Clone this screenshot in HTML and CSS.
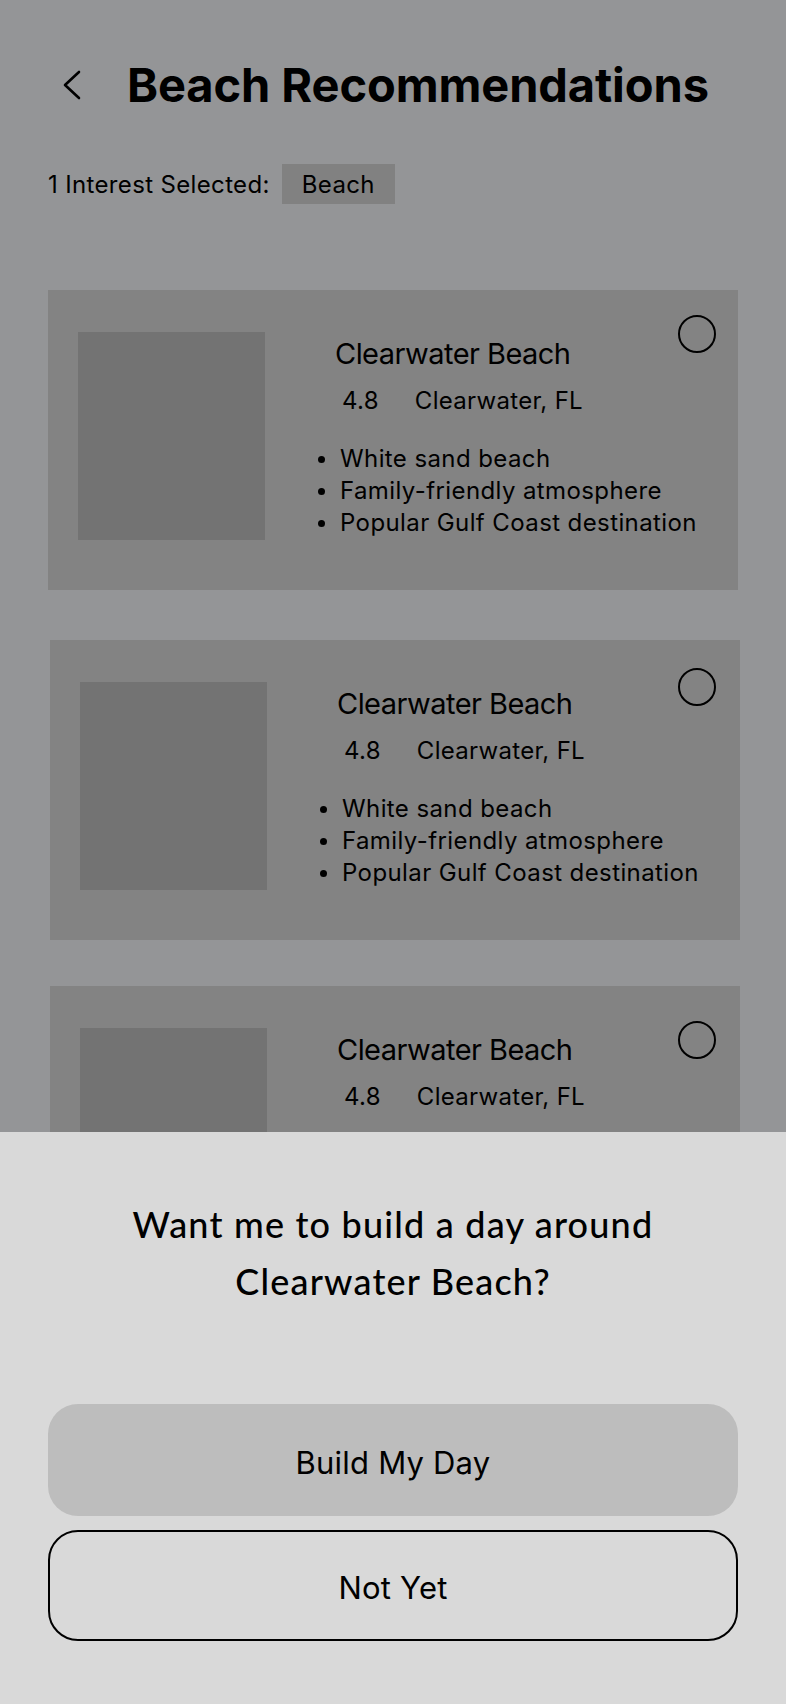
FILE: index.html
```html
<!DOCTYPE html>
<html lang="en">
<head>
<meta charset="utf-8">
<title>Beach Recommendations</title>
<link rel="stylesheet" href="styles.css">
</head>
<body>
<div class="screen">
  <header class="top">
    <button class="back" aria-label="Back">
      <svg width="20" height="30" viewBox="0 0 20 30"><polyline points="17,2 3,15 17,28" fill="none" stroke="#000" stroke-width="2.6" stroke-linecap="round" stroke-linejoin="round"/></svg>
    </button>
    <h1 class="title">Beach Recommendations</h1>
  </header>

  <div class="interest">
    <span class="interest-label">1 Interest Selected:</span>
    <span class="chip">Beach</span>
  </div>

  <div class="cards">
    <article class="card">
      <div class="photo"></div>
      <div class="info">
        <h2 class="name">Clearwater Beach</h2>
        <div class="meta"><span class="rating">4.8</span><span class="loc">Clearwater, FL</span></div>
        <ul class="points">
          <li>White sand beach</li>
          <li>Family-friendly atmosphere</li>
          <li>Popular Gulf Coast destination</li>
        </ul>
      </div>
      <span class="radio"></span>
    </article>
    <article class="card second">
      <div class="photo"></div>
      <div class="info">
        <h2 class="name">Clearwater Beach</h2>
        <div class="meta"><span class="rating">4.8</span><span class="loc">Clearwater, FL</span></div>
        <ul class="points">
          <li>White sand beach</li>
          <li>Family-friendly atmosphere</li>
          <li>Popular Gulf Coast destination</li>
        </ul>
      </div>
      <span class="radio"></span>
    </article>
    <article class="card third">
      <div class="photo"></div>
      <div class="info">
        <h2 class="name">Clearwater Beach</h2>
        <div class="meta"><span class="rating">4.8</span><span class="loc">Clearwater, FL</span></div>
      </div>
      <span class="radio"></span>
    </article>
  </div>

  <section class="sheet">
    <p class="question">Want me to build a day around<br>Clearwater Beach?</p>
    <button class="btn btn-primary">Build My Day</button>
    <button class="btn btn-outline">Not Yet</button>
  </section>
</div>
</body>
</html>
```

FILE: styles.css
```css
* { box-sizing: border-box; }

html, body {
  margin: 0;
  padding: 0;
}

body {
  width: 786px;
  height: 1704px;
  overflow: hidden;
  background: #949597;
  font-family: "Inter", "Liberation Sans", sans-serif;
  color: #000;
}

.screen {
  position: relative;
  width: 786px;
  height: 1704px;
  overflow: hidden;
}

.top {
  display: flex;
  align-items: center;
  height: 60px;
  margin-top: 55px;
  padding-left: 62px;
}

.back {
  display: flex;
  align-items: center;
  justify-content: center;
  width: 20px;
  height: 30px;
  padding: 0;
  border: 0;
  background: none;
}

.title {
  margin: 0 0 0 45px;
  font-size: 47px;
  line-height: 60px;
  font-weight: 700;
  letter-spacing: -0.1px;
}

.interest {
  display: flex;
  align-items: center;
  gap: 12px;
  margin-top: 49px;
  padding-left: 48px;
  height: 40px;
  font-size: 24px;
  letter-spacing: 0.35px;
}

.chip {
  display: flex;
  align-items: center;
  height: 40px;
  padding: 0 20px;
  background: #818181;
}

.cards {
  display: flex;
  flex-direction: column;
  height: 842px;
  margin-top: 86px;
  padding-left: 48px;
  overflow: hidden;
}

.card {
  position: relative;
  flex: none;
  display: flex;
  width: 690px;
  height: 300px;
  padding: 42px 0 0 30px;
  background: #838383;
}

.card.second {
  margin-left: 2px;
  margin-top: 50px;
}

.card.third {
  margin-left: 2px;
  margin-top: 46px;
}

.photo {
  flex: none;
  width: 187px;
  height: 208px;
  background: #737373;
}

.info {
  display: flex;
  flex-direction: column;
  margin-left: 53px;
  padding-top: 4px;
}

.name {
  margin: 0;
  padding-left: 17px;
  font-size: 29px;
  line-height: 36px;
  font-weight: 400;
  letter-spacing: -0.55px;
}

.meta {
  display: flex;
  gap: 36px;
  margin-top: 14px;
  padding-left: 24px;
  font-size: 24px;
  line-height: 30px;
  letter-spacing: 0.3px;
}

.points {
  margin: 27px 0 0;
  padding: 0;
  list-style: none;
  font-size: 24px;
  line-height: 32px;
  letter-spacing: 0.4px;
}

.points li {
  display: flex;
  align-items: center;
  gap: 15px;
}

.points li::before {
  content: "";
  flex: none;
  width: 7px;
  height: 7px;
  border-radius: 50%;
  background: #000;
}

.radio {
  position: absolute;
  top: 25px;
  right: 22px;
  width: 38px;
  height: 38px;
  border: 2px solid #000;
  border-radius: 50%;
}

.card.second .radio {
  top: 28px;
  right: 24px;
}

.card.third .radio {
  top: 35px;
  right: 24px;
}

.sheet {
  position: absolute;
  left: 0;
  right: 0;
  bottom: 0;
  height: 572px;
  display: flex;
  flex-direction: column;
  padding: 64px 48px 0;
  background: #d9d9d9;
}

.question {
  margin: 0;
  text-align: center;
  font-family: "Lato", "Liberation Sans", sans-serif;
  font-weight: 500;
  font-size: 36px;
  line-height: 57px;
  letter-spacing: 1.2px;
}

.btn {
  display: flex;
  align-items: center;
  justify-content: center;
  width: 690px;
  padding: 4px 0 0;
  font-family: "Inter", "Liberation Sans", sans-serif;
  font-size: 31px;
  letter-spacing: 0.2px;
  color: #000;
  border-radius: 30px;
}

.btn-primary {
  height: 112px;
  margin-top: 94px;
  border: 0;
  background: #bdbdbd;
}

.btn-outline {
  height: 111px;
  margin-top: 14px;
  border: 2px solid #000;
  background: transparent;
}
```
